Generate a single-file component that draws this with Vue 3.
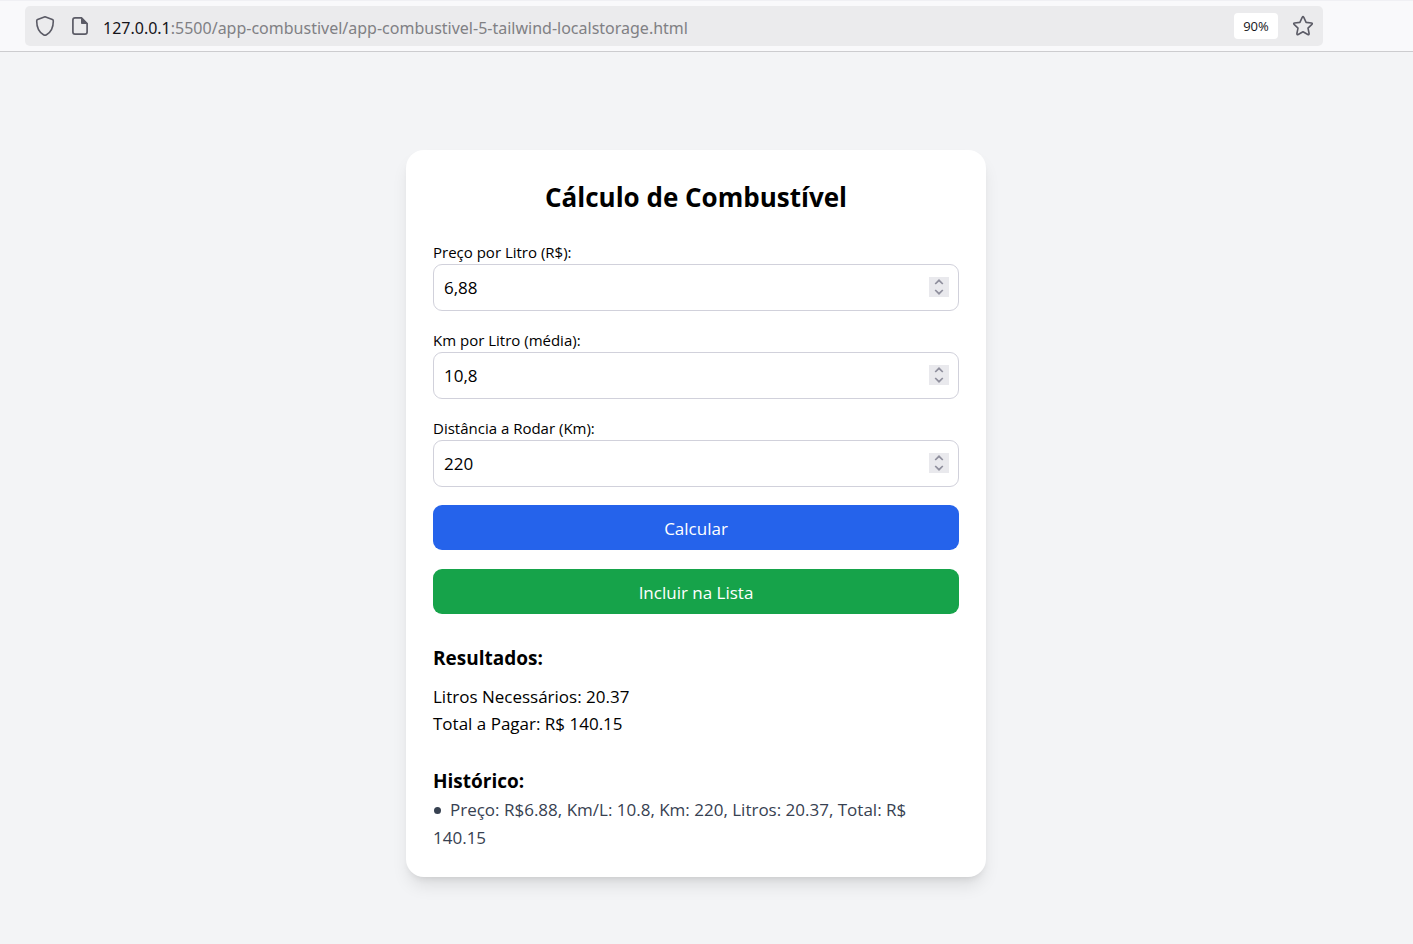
<script setup>
import { ref, computed } from 'vue'

const fields = ref([
  { id: 'preco', label: 'Preço por Litro (R$):', value: '6,88', step: 0.01 },
  { id: 'media', label: 'Km por Litro (média):', value: '10,8', step: 0.1 },
  { id: 'distancia', label: 'Distância a Rodar (Km):', value: '220', step: 1 },
])

const result = ref({ litros: '20.37', total: '140.15' })
const history = ref([
  { preco: 6.88, media: 10.8, km: 220, litros: '20.37', total: '140.15' },
])

const numbers = computed(() =>
  fields.value.map((f) => parseFloat(f.value.replace(',', '.')) || 0)
)

function nudge(field, direction) {
  const current = parseFloat(field.value.replace(',', '.')) || 0
  const next = Math.round((current + direction * field.step) * 100) / 100
  field.value = String(next).replace('.', ',')
}

function calculate() {
  const [preco, media, km] = numbers.value
  const litros = media ? km / media : 0
  result.value = { litros: litros.toFixed(2), total: (litros * preco).toFixed(2) }
}

function addToList() {
  calculate()
  const [preco, media, km] = numbers.value
  history.value.push({ preco, media, km, ...result.value })
}
</script>

<template>
  <div class="page">
    <header class="toolbar">
      <div class="address">
        <button class="icon-button" type="button" aria-label="Proteção">
          <svg width="20" height="22" viewBox="0 0 20 22" fill="none" stroke="#5b5b66" stroke-width="1.6" stroke-linejoin="round">
            <path d="M10 1.8 L17.4 4.6 Q18.3 5 18.3 6 C18.3 12.5 15.6 17.4 11.5 19.8 Q10 20.7 8.5 19.8 C4.4 17.4 1.7 12.5 1.7 6 Q1.7 5 2.6 4.6 Z" />
          </svg>
        </button>
        <button class="icon-button" type="button" aria-label="Informações do site">
          <svg width="18" height="20" viewBox="0 0 18 20" fill="none" stroke="#5b5b66" stroke-width="1.7" stroke-linejoin="round">
            <path d="M4 1.9 H10.5 L16.1 7.5 V16 Q16.1 18.1 14 18.1 H4 Q1.9 18.1 1.9 16 V4 Q1.9 1.9 4 1.9 Z" />
            <path d="M10.5 1.9 V7.5 H16.1 Z" fill="#5b5b66" stroke-width="1" />
          </svg>
        </button>
        <div class="url"><span class="host">127.0.0.1</span>:5500/app-combustivel/app-combustivel-5-tailwind-localstorage.html</div>
        <button class="zoom" type="button">90%</button>
        <button class="icon-button" type="button" aria-label="Favoritar">
          <svg width="22" height="22" viewBox="0 0 22 22" fill="none" stroke="#5b5b66" stroke-width="1.6" stroke-linejoin="round">
            <path d="M10.2 2.3 Q11 1 11.8 2.3 L14.1 7.4 L19.4 8 Q20.9 8.3 19.9 9.4 L16 13.1 L17.1 18.5 Q17.2 20.1 15.8 19.5 L11 16.7 L6.2 19.5 Q4.8 20.1 4.9 18.5 L6 13.1 L2.1 9.4 Q1.1 8.3 2.6 8 L7.9 7.4 Z" />
          </svg>
        </button>
      </div>
    </header>

    <main class="content">
      <section class="card">
        <h1>Cálculo de Combustível</h1>
        <form class="form" @submit.prevent="calculate">
          <div v-for="field in fields" :key="field.id" class="field">
            <label :for="field.id">{{ field.label }}</label>
            <div class="number">
              <input :id="field.id" v-model="field.value" type="text" inputmode="decimal" />
              <div class="spinner">
                <button type="button" aria-label="Aumentar" @click="nudge(field, 1)">
                  <svg width="10" height="6" viewBox="0 0 10 6" fill="none" stroke="#8f8f9d" stroke-width="1.7">
                    <path d="M1.2 5 L5 1.3 L8.8 5" />
                  </svg>
                </button>
                <button type="button" aria-label="Diminuir" @click="nudge(field, -1)">
                  <svg width="10" height="6" viewBox="0 0 10 6" fill="none" stroke="#8f8f9d" stroke-width="1.7">
                    <path d="M1.2 1 L5 4.7 L8.8 1" />
                  </svg>
                </button>
              </div>
            </div>
          </div>
          <div class="actions">
            <button class="action primary" type="submit">Calcular</button>
            <button class="action success" type="button" @click="addToList">Incluir na Lista</button>
          </div>
        </form>

        <div class="results">
          <h2>Resultados:</h2>
          <p>Litros Necessários: {{ result.litros }}</p>
          <p>Total a Pagar: R$ {{ result.total }}</p>
        </div>

        <div class="history">
          <h2>Histórico:</h2>
          <ul>
            <li v-for="(item, i) in history" :key="i">Preço: R${{ item.preco }}, Km/L: {{ item.media }}, Km: {{ item.km }}, Litros: {{ item.litros }}, Total: R$ {{ item.total }}</li>
          </ul>
        </div>
      </section>
    </main>
  </div>
</template>

<style>
body {
  margin: 0;
  background: #f3f4f6;
}
</style>

<style scoped>
* {
  box-sizing: border-box;
}
.page {
  min-height: 100vh;
  font-family: "Open Sans", "Noto Sans", sans-serif;
  font-size: 17px;
  line-height: 27px;
  color: #000;
  background: #f3f4f6;
}
button,
input {
  margin: 0;
  padding: 0;
  border: 0;
  background: none;
  font: inherit;
  color: inherit;
}
button {
  cursor: pointer;
}
svg {
  display: block;
}
.toolbar {
  padding: 5px 90px 5px 25px;
  background: #f9f9fb;
  border-top: 1px solid #f0f0f4;
  border-bottom: 1px solid #cccccf;
}
.address {
  display: flex;
  align-items: center;
  height: 40px;
  padding: 0 9px 0 10px;
  border-radius: 5px;
  background: #ebebed;
}
.icon-button + .icon-button {
  margin-left: 16px;
}
.url {
  flex: 1;
  min-width: 0;
  margin-left: 14px;
  padding-top: 4px;
  overflow: hidden;
  white-space: nowrap;
  font-family: "Noto Sans", "Open Sans", sans-serif;
  font-size: 16px;
  color: #808084;
}
.host {
  color: #15141a;
}
.zoom {
  width: 44px;
  height: 26px;
  margin-right: 14px;
  border-radius: 4px;
  background: #fff;
  font-size: 13px;
  color: #15141a;
}
.content {
  display: flex;
  justify-content: center;
  padding: 98px 21px 67px 0;
}
.card {
  width: 100%;
  max-width: 580px;
  padding: 27px 27px 25px;
  border-radius: 18px;
  background: #fff;
  box-shadow: 0 11px 17px -3px rgba(0, 0, 0, 0.1), 0 5px 7px -4px rgba(0, 0, 0, 0.1);
}
h1 {
  margin: 0 0 24px;
  font-size: 26px;
  line-height: 40px;
  font-weight: 700;
  text-align: center;
}
.form {
  display: flex;
  flex-direction: column;
  gap: 18px;
}
.field {
  display: flex;
  flex-direction: column;
}
label {
  font-size: 15px;
  line-height: 23px;
}
.number {
  display: flex;
  align-items: center;
  height: 47px;
  padding: 0 9px 0 10px;
  border: 1px solid #d1d1db;
  border-radius: 9px;
}
.number input {
  flex: 1;
  min-width: 0;
  height: 100%;
  outline: none;
}
.spinner {
  display: flex;
  flex-direction: column;
  width: 20px;
  height: 20px;
  margin-bottom: 1px;
  background: #e9e9ed;
}
.spinner button {
  display: flex;
  flex: 1;
  align-items: center;
  justify-content: center;
}
.actions {
  display: flex;
  flex-direction: column;
  gap: 19px;
}
.action {
  height: 45px;
  padding-top: 1px;
  border-radius: 9px;
  color: #fff;
}
.primary {
  background: #2563eb;
}
.success {
  background: #16a34a;
}
.results,
.history {
  margin-top: 30px;
}
h2 {
  margin: 0;
  font-size: 19px;
  line-height: 28px;
  font-weight: 700;
}
.results h2 {
  margin-bottom: 11px;
}
p {
  margin: 0;
}
ul {
  margin: 0;
  padding: 1px 0 0;
  list-style: none;
  line-height: 28px;
  color: #374151;
}
li::before {
  content: "";
  display: inline-block;
  width: 7px;
  height: 7px;
  margin: 0 9px 2px 1px;
  border-radius: 50%;
  background: #374151;
}
</style>
